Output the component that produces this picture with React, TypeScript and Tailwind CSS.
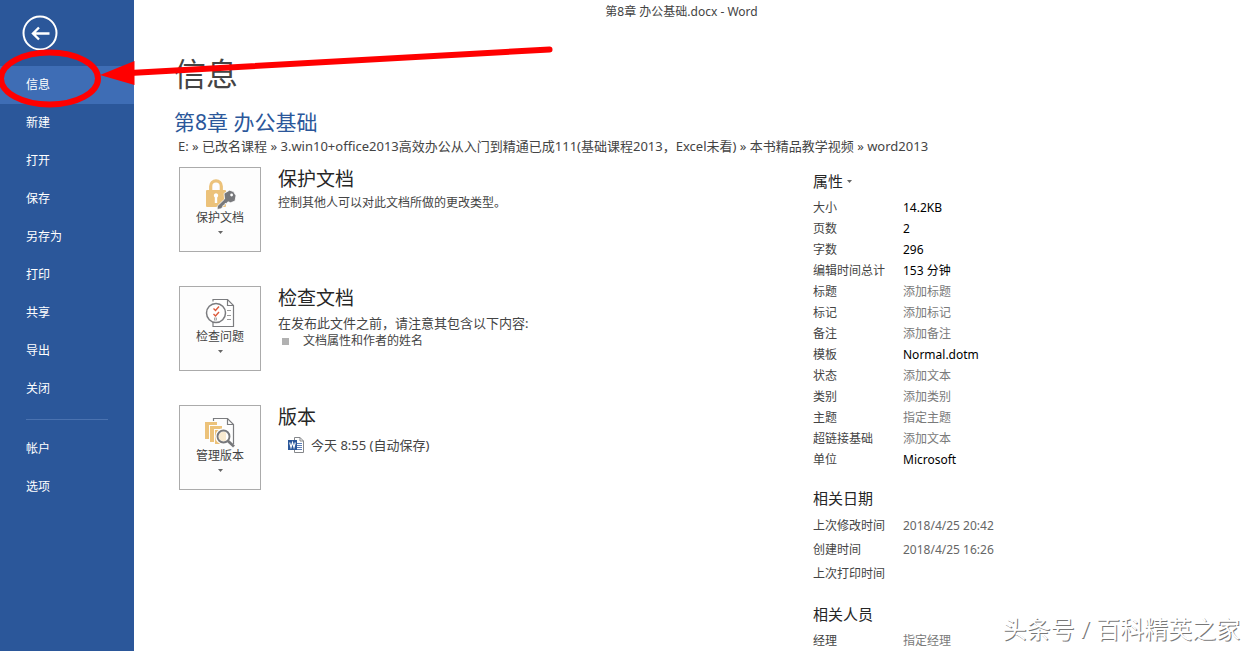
import React from 'react';

const navMain = ['信息', '新建', '打开', '保存', '另存为', '打印', '共享', '导出', '关闭'];
const navExtra = ['帐户', '选项'];

type Property = { label: string; value?: string; hint?: string };

const properties: Property[] = [
  { label: '大小', value: '14.2KB' },
  { label: '页数', value: '2' },
  { label: '字数', value: '296' },
  { label: '编辑时间总计', value: '153 分钟' },
  { label: '标题', hint: '添加标题' },
  { label: '标记', hint: '添加标记' },
  { label: '备注', hint: '添加备注' },
  { label: '模板', value: 'Normal.dotm' },
  { label: '状态', hint: '添加文本' },
  { label: '类别', hint: '添加类别' },
  { label: '主题', hint: '指定主题' },
  { label: '超链接基础', hint: '添加文本' },
  { label: '单位', value: 'Microsoft' },
];

const dates = [
  { label: '上次修改时间', value: '2018/4/25 20:42' },
  { label: '创建时间', value: '2018/4/25 16:26' },
  { label: '上次打印时间', value: '' },
];

function NavItem({ label, active = false }: { label: string; active?: boolean }) {
  return (
    <li>
      <a
        href="#"
        aria-current={active ? 'page' : undefined}
        className={
          active
            ? 'flex h-[38px] items-center bg-[#3e6db5] pl-[26px] text-xs text-white'
            : 'flex h-[38px] items-center pl-[26px] text-xs text-white hover:bg-[#3e6db5]'
        }
      >
        {label}
      </a>
    </li>
  );
}

function Caret() {
  return (
    <svg width="5" height="3" viewBox="0 0 5 3" aria-hidden="true">
      <path d="M0 0h5L2.5 3z" fill="#666" />
    </svg>
  );
}

function LockIcon() {
  return (
    <svg width="32" height="32" viewBox="0 0 32 32" aria-hidden="true">
      <path d="M6.700 13V8.200a5.300 5.300 0 0 1 10.600 0V13" fill="none" stroke="#ecc27a" strokeWidth="3.2" />
      <rect x="2" y="12" width="20" height="17" rx="1" fill="#ecc27a" />
      <path d="M12 15.200a2.300 2.300 0 0 1 1.200 4.200V25h-2.400v-5.600A2.300 2.300 0 0 1 12 15.200z" fill="#fff" />
      <path
        d="M20 15.500 25.500 12.200l4 1.400 2.500 4.100-1 5.400-4.400 1.600-2.700-.900-1.200 1.600-1.700.100-.200 1.700-1.700.200-.400 1.700-1.800 1.700-3.700.700.100-3.400 7.300-7.100z"
        fill="#77787b"
        stroke="#fff"
        strokeWidth=".8"
      />
      <circle cx="27.600" cy="17" r="1.400" fill="#fff" />
    </svg>
  );
}

function InspectIcon() {
  return (
    <svg width="32" height="32" viewBox="0 0 32 32" aria-hidden="true">
      <path d="M9 4.500V2.500h14.500l6 6V29.500H9V25" fill="#fff" stroke="#7b7c7f" strokeWidth="1.200" />
      <path d="M23.500 2.500v6h6" fill="none" stroke="#7b7c7f" strokeWidth="1.200" />
      <path d="M23 13.500h4M23 18.500h4M23 22.500h4" stroke="#9a9a9a" />
      <circle cx="12" cy="16" r="9.500" fill="#fff" stroke="#7b7c7f" strokeWidth="1.500" />
      <path d="m9.500 11.500 2 2 3.500-4M9.500 17l2 2 3.500-4" fill="none" stroke="#dc5a3c" strokeWidth="1.400" />
      <rect x="10.500" y="21" width="2" height="2" fill="none" stroke="#999" strokeWidth=".8" />
    </svg>
  );
}

function VersionsIcon() {
  return (
    <svg width="32" height="32" viewBox="0 0 32 32" aria-hidden="true">
      <path d="M9.500 5V2.500h14l6 6V28" fill="none" stroke="#7b7c7f" strokeWidth="1.200" />
      <path d="M23.500 2.500v6h6" fill="none" stroke="#7b7c7f" strokeWidth="1.200" />
      <path d="M1 6h12v3H5v14H1z" fill="#ecc27a" />
      <path d="M6 10h12v3h-8v13H6z" fill="#ecc27a" />
      <path d="M11 14h11v14H11z" fill="#ecc27a" />
      <circle cx="19.500" cy="20.500" r="6.500" fill="#fff" fillOpacity=".65" stroke="#fff" strokeWidth="3.500" />
      <circle cx="19.500" cy="20.500" r="6" fill="none" stroke="#77787b" strokeWidth="1.900" />
      <path d="m24 25 6 5.500" stroke="#77787b" strokeWidth="2.800" />
    </svg>
  );
}

function WordFileIcon() {
  return (
    <svg width="16" height="16" viewBox="0 0 16 16" aria-hidden="true">
      <path d="M6.500.500h5.500l3.500 3.500v11.500h-9z" fill="#fff" stroke="#85878a" />
      <path d="M12 .500V4h3.500" fill="none" stroke="#85878a" />
      <path d="M9 6.500h5M9 8.500h5M9 10.500h5M9 12.500h5" stroke="#5d7fb8" />
      <path d="M0 3h9v10H0z" fill="#2b579a" />
      <path d="m1.700 5.500 1.300 5 1.500-5 1.500 5 1.300-5" fill="none" stroke="#fff" strokeWidth="1.100" />
    </svg>
  );
}

function Section({
  icon,
  action,
  title,
  children,
}: {
  icon: React.ReactNode;
  action: string;
  title: string;
  children: React.ReactNode;
}) {
  return (
    <section className="flex gap-[17px]">
      <button
        type="button"
        className="flex h-[85px] w-[82px] shrink-0 flex-col items-center border border-[#ababab] bg-[#fdfdfd] pt-[10px] text-xs text-[#444]"
      >
        {icon}
        <span className="whitespace-nowrap leading-4">{action}</span>
        <span className="flex h-3 items-center">
          <Caret />
        </span>
      </button>
      <div className="min-w-0">
        <h3 className="text-[19px] leading-6 text-[#262626]">{title}</h3>
        {children}
      </div>
    </section>
  );
}

export default function App() {
  return (
    <div className="relative flex min-h-screen overflow-hidden bg-white font-['Noto_Sans','Noto_Sans_CJK_SC',sans-serif] text-[#444]">
      <nav className="w-[134px] shrink-0 bg-[#2b579a]" aria-label="文件">
        <div className="flex h-[66px] pl-[22px] pt-[15px]">
          <button type="button" aria-label="返回" className="h-9 w-9">
            <svg width="36" height="36" viewBox="0 0 36 36" fill="none" stroke="#fff">
              <circle cx="18" cy="18" r="16.500" strokeWidth="2" />
              <path d="M27.500 18.500H12M17 12.500l-6 6 6 6" strokeWidth="2.400" />
            </svg>
          </button>
        </div>
        <ul>
          {navMain.map((label, i) => (
            <NavItem key={label} label={label} active={i === 0} />
          ))}
        </ul>
        <hr className="mx-[26px] mb-[10px] mt-[11px] border-[#4a72b0]" />
        <ul>
          {navExtra.map((label) => (
            <NavItem key={label} label={label} />
          ))}
        </ul>
      </nav>

      <main className="min-w-0 flex-1 pl-10">
        <header className="pr-[67px] text-center text-xs leading-6">第8章 办公基础.docx - Word</header>
        <h1 className="mt-[30px] text-[32px] leading-10">信息</h1>
        <h2 className="mt-[14px] text-[21px] leading-7 text-[#2b579a]">第8章 办公基础</h2>
        <p className="whitespace-nowrap pl-1 text-[13px] leading-5">
          E: » 已改名课程 » 3.win10+office2013高效办公从入门到精通已成111(基础课程2013，Excel未看) » 本书精品教学视频 » word2013
        </p>

        <div className="mt-[11px] grid grid-cols-[minmax(0,634px)_minmax(200px,1fr)] pl-[5px]">
          <div className="flex flex-col gap-[34px]">
            <Section icon={<LockIcon />} action="保护文档" title="保护文档">
              <p className="text-xs leading-6">控制其他人可以对此文档所做的更改类型。</p>
            </Section>
            <Section icon={<InspectIcon />} action="检查问题" title="检查文档">
              <p className="pt-[3px] text-[13px] leading-5">在发布此文件之前，请注意其包含以下内容:</p>
              <ul>
                <li className="flex items-center gap-[14px] pl-1 text-xs leading-4">
                  <span className="h-[7px] w-[7px] bg-[#b1b1b1]" />
                  文档属性和作者的姓名
                </li>
              </ul>
            </Section>
            <Section icon={<VersionsIcon />} action="管理版本" title="版本">
              <a href="#" className="mt-[6px] flex items-center gap-[7px] pl-[10px] text-[13px] leading-5">
                <WordFileIcon />
                今天 8:55 (自动保存)
              </a>
            </Section>
          </div>

          <aside className="text-xs">
            <button type="button" className="mb-[2px] flex h-7 items-center gap-1 text-[15px] text-[#262626]">
              属性
              <Caret />
            </button>
            <table className="border-collapse">
              <tbody>
                {properties.map(({ label, value, hint }, i) => (
                  <tr key={label} className="h-[21px]">
                    <th scope="row" className="w-[90px] p-0 text-left font-normal leading-5">
                      {hint ? <label htmlFor={`property-${i}`}>{label}</label> : label}
                    </th>
                    <td className="p-0 leading-5 text-black">
                      {hint ? (
                        <input
                          id={`property-${i}`}
                          placeholder={hint}
                          className="block h-5 w-40 placeholder:text-[#7a7a7a]"
                        />
                      ) : (
                        value
                      )}
                    </td>
                  </tr>
                ))}
              </tbody>
            </table>

            <h3 className="mt-4 text-[15px] leading-6 text-[#262626]">相关日期</h3>
            <table className="mt-1 border-collapse">
              <tbody>
                {dates.map(({ label, value }) => (
                  <tr key={label} className="h-6">
                    <th scope="row" className="w-[90px] p-0 text-left font-normal leading-5">
                      {label}
                    </th>
                    <td className="p-0 leading-5 text-[#666]">{value}</td>
                  </tr>
                ))}
              </tbody>
            </table>

            <h3 className="mt-4 text-[15px] leading-6 text-[#262626]">相关人员</h3>
            <div className="mt-1 flex h-[21px] items-center">
              <label htmlFor="manager" className="w-[90px]">
                经理
              </label>
              <input id="manager" placeholder="指定经理" className="h-5 w-40 placeholder:text-[#7a7a7a]" />
            </div>
          </aside>
        </div>
      </main>

      <svg
        className="pointer-events-none absolute left-0 top-0"
        width="560"
        height="120"
        viewBox="0 0 560 120"
        aria-hidden="true"
      >
        <ellipse cx="49.500" cy="78.500" rx="48.500" ry="26" fill="none" stroke="#f00" strokeWidth="6" />
        <path d="M130 73 549.500 49.500" stroke="#f00" strokeWidth="6" strokeLinecap="round" />
        <path d="M100 75 134.500 61v24z" fill="#f00" />
      </svg>
      <div className="absolute bottom-1 right-4 whitespace-pre text-2xl leading-9 text-white [text-shadow:1px_1px_0_#777]">
        头条号 / 百科精英之家
      </div>
    </div>
  );
}
